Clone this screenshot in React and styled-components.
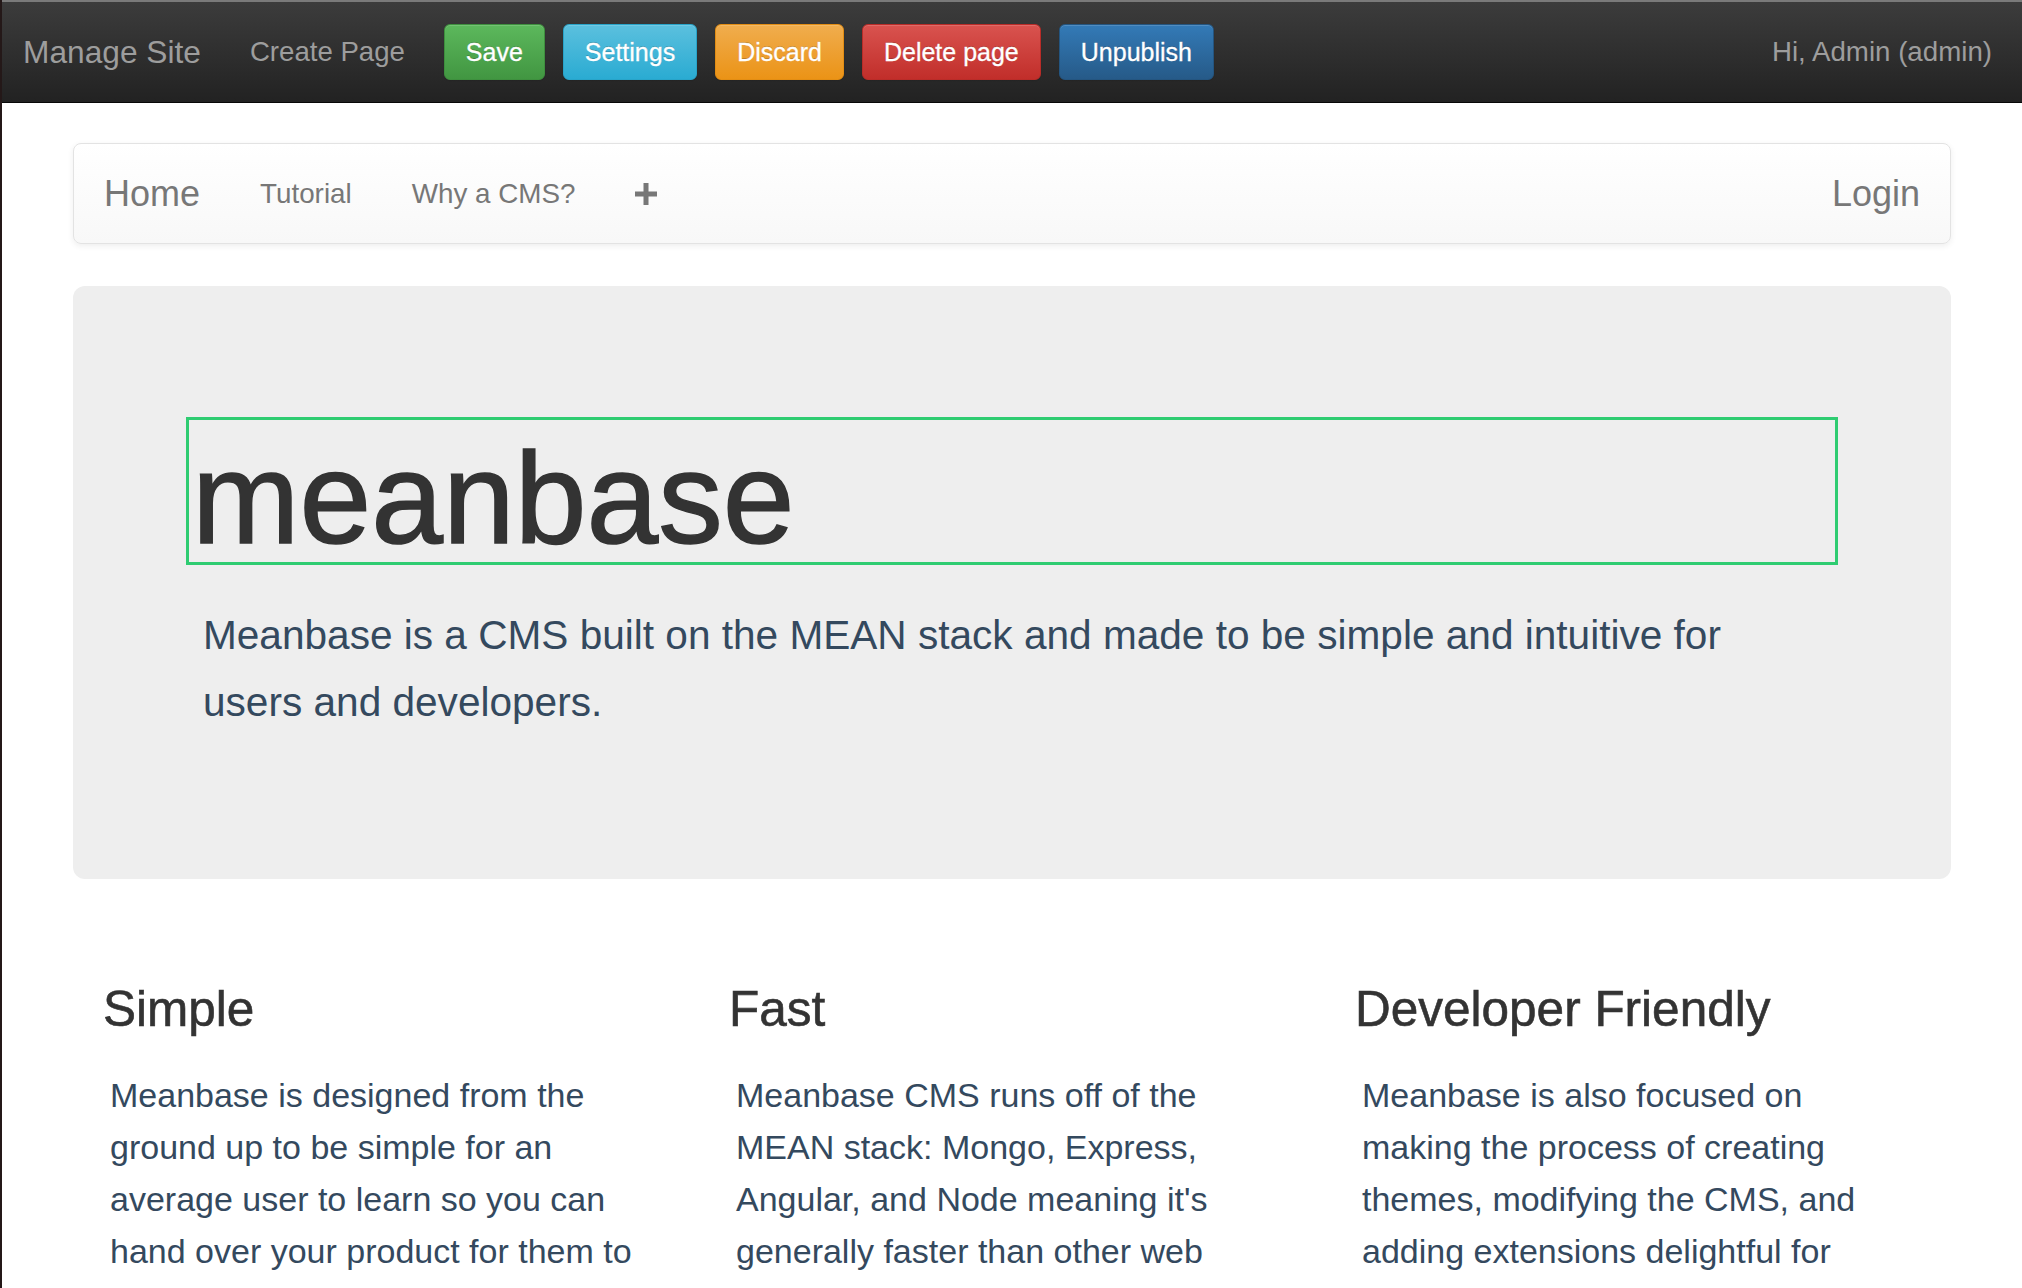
import styled, { createGlobalStyle, css } from "styled-components";

const GlobalStyle = createGlobalStyle`
  body {
    margin: 0;
    background: #fff;
    font-family: "Liberation Sans", Arial, sans-serif;
    border-left: 2px solid #241818;
    min-height: 1288px;
  }
`

const TopBar = styled('header')`
  display: flex;
  align-items: center;
  box-sizing: border-box;
  height: 103px;
  padding: 0 30px 0 21px;
  background: linear-gradient(#3c3c3c, #222);
  border-top: 2px solid #7a7a7a;
  border-bottom: 1px solid #080808;
`

const Brand = styled('span')`
  font-size: 31.7px;
  color: #9d9d9d;
  margin-right: 49px;
`

const BarLink = styled('span')`
  font-size: 27.6px;
  color: #9d9d9d;
  margin-right: 39px;
`

const ButtonsWrapper = styled('div')`
  display: flex;
  gap: 18px;
`

const variants = {
  success: ['#5cb85c', '#419641', '#3e8f3e'],
  info: ['#5bc0de', '#2aabd2', '#28a4c9'],
  warning: ['#f0ad4e', '#eb9316', '#e38d13'],
  danger: ['#d9534f', '#c12e2a', '#b92c28'],
  primary: ['#337ab7', '#265a88', '#245580'],
}

const ActionButton = styled('button')`
  height: 56px;
  padding: 0 21px;
  font-family: inherit;
  font-size: 25px;
  color: #fff;
  border-radius: 6px;
  cursor: pointer;
  -webkit-text-stroke: 0.3px #fff;
  text-shadow: 0 -1px 0 rgba(0, 0, 0, .2);
  box-shadow: inset 0 1px 0 rgba(255, 255, 255, .15), 0 1px 1px rgba(0, 0, 0, .075);
  ${({$variant}) => {
    const [top, bottom, border] = variants[$variant]
    return css`
      background: linear-gradient(${top}, ${bottom});
      border: 1px solid ${border};
    `
  }}
`

const Greeting = styled('span')`
  margin-left: auto;
  font-size: 27.7px;
  color: #9d9d9d;
`

const PageNav = styled('nav')`
  display: flex;
  align-items: center;
  box-sizing: border-box;
  width: 1878px;
  height: 101px;
  margin: 40px auto 0;
  background: linear-gradient(#fff, #f8f8f8);
  border: 1px solid #e3e3e3;
  border-radius: 8px;
  box-shadow: 0 2px 6px rgba(0, 0, 0, .07);
`

const NavItem = styled('a')`
  display: flex;
  align-items: center;
  padding: 0 30px;
  font-size: ${({$large}) => $large ? '36px' : '27.8px'};
  color: #777;
  ${({$right}) => $right && css`margin-left: auto;`}
`

const Jumbotron = styled('section')`
  box-sizing: border-box;
  width: 1878px;
  margin: 42px auto 0;
  padding: 131px 113px 143px;
  background: #eee;
  border-radius: 12px;
`

const EditableTitle = styled('h1')`
  box-sizing: border-box;
  height: 148px;
  margin: 0;
  padding: 14px 0 0 3px;
  border: 3px solid #2ecc71;
  font-size: 129px;
  line-height: 128px;
  font-weight: 400;
  color: #333;
  -webkit-text-stroke: 1.5px #333;
`

const Lead = styled('p')`
  margin: 37px 17px 0;
  font-size: 40.6px;
  line-height: 67px;
  color: #34495e;
`

const Features = styled('div')`
  display: grid;
  grid-template-columns: repeat(3, 1fr);
  width: 1878px;
  margin: 102px auto 0;
`

const Feature = styled('div')`
  padding: 0 30px;
`

const FeatureTitle = styled('h3')`
  margin: 0;
  font-size: 49.5px;
  line-height: 55px;
  font-weight: 400;
  color: #333;
  -webkit-text-stroke: 0.6px #333;
`

const FeatureText = styled('p')`
  width: 540px;
  margin: 33px 0 0;
  padding-left: 7px;
  font-size: 34px;
  line-height: 52px;
  color: #34495e;
`

const PlusIcon = () => (
  <svg width="22" height="22" viewBox="0 0 22 22">
    <rect x="8.5" y="0" width="5" height="22" fill="#777" />
    <rect x="0" y="8.5" width="22" height="5" fill="#777" />
  </svg>
)

const features = [
  {
    title: 'Simple',
    text: 'Meanbase is designed from the ground up to be simple for an average user to learn so you can hand over your product for them to use and manage.',
  },
  {
    title: 'Fast',
    text: "Meanbase CMS runs off of the MEAN stack: Mongo, Express, Angular, and Node meaning it's generally faster than other web based content management systems.",
  },
  {
    title: 'Developer Friendly',
    text: 'Meanbase is also focused on making the process of creating themes, modifying the CMS, and adding extensions delightful for developers.',
  },
]

export default function App() {
  return (
    <>
      <GlobalStyle />
      <TopBar>
        <Brand>Manage Site</Brand>
        <BarLink>Create Page</BarLink>
        <ButtonsWrapper>
          <ActionButton $variant="success">Save</ActionButton>
          <ActionButton $variant="info">Settings</ActionButton>
          <ActionButton $variant="warning">Discard</ActionButton>
          <ActionButton $variant="danger">Delete page</ActionButton>
          <ActionButton $variant="primary">Unpublish</ActionButton>
        </ButtonsWrapper>
        <Greeting>Hi, Admin (admin)</Greeting>
      </TopBar>

      <PageNav>
        <NavItem $large>Home</NavItem>
        <NavItem>Tutorial</NavItem>
        <NavItem>Why a CMS?</NavItem>
        <NavItem><PlusIcon /></NavItem>
        <NavItem $large $right>Login</NavItem>
      </PageNav>

      <Jumbotron>
        <EditableTitle>meanbase</EditableTitle>
        <Lead>Meanbase is a CMS built on the MEAN stack and made to be simple and intuitive for users and developers.</Lead>
      </Jumbotron>

      <Features>
        {features.map(f => (
          <Feature key={f.title}>
            <FeatureTitle>{f.title}</FeatureTitle>
            <FeatureText>{f.text}</FeatureText>
          </Feature>
        ))}
      </Features>
    </>
  )
}
